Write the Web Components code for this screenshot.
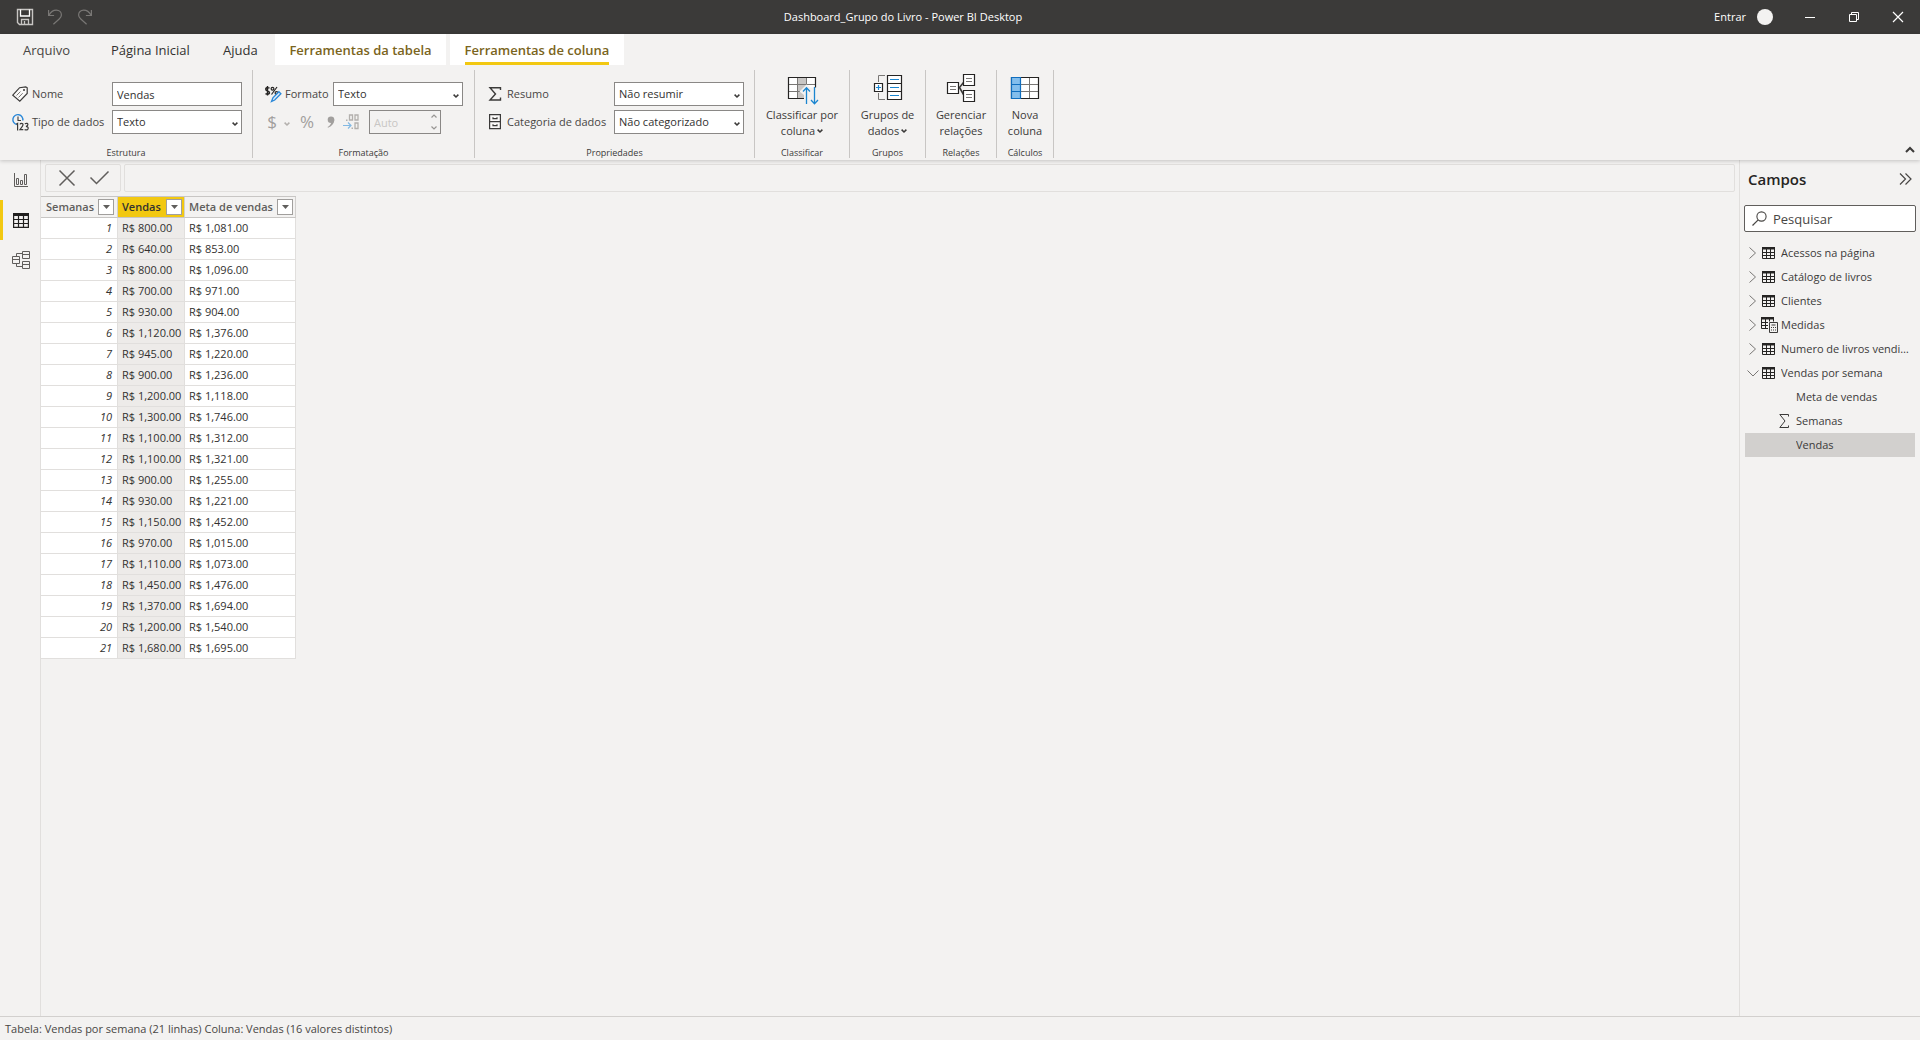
<!DOCTYPE html>
<html lang="pt-BR">
<head>
<meta charset="utf-8">
<title>Dashboard_Grupo do Livro - Power BI Desktop</title>
<style>
html, body { margin: 0; height: 100%; }
body { font: 11px/16px "Open Sans", "Noto Sans", sans-serif; color: #323130; background: #f3f2f1; overflow: hidden; }
</style>
</head>
<body>
<desktop-app></desktop-app>
<script>
const RESET = `
*, *::before, *::after { box-sizing: border-box; }
button, input, select { font: inherit; color: inherit; margin: 0; padding: 0; border: 0; background: none; border-radius: 0; outline: 0; }
button { display: inline-flex; align-items: center; justify-content: center; }
a { color: inherit; text-decoration: none; }
`;
function define(name, render, after) {
  customElements.define(name, class extends HTMLElement {
    constructor() { super(); this.attachShadow({ mode: 'open' }); }
    connectedCallback() {
      if (this.shadowRoot.childNodes.length) return;
      const t = document.createElement('template');
      t.innerHTML = render(this);
      this.shadowRoot.append(t.content.cloneNode(true));
      if (after) after(this);
    }
  });
}

/* Icons: [width, height, drawing] */
const TABLE = '<path d="M.5 1h12v10.500H.5zM.5 5.500h12M.5 8.500h12M4.500 1v10.500M8.500 1v10.500" fill="none" stroke="#252423"/><path d="M0 0h13v2.500H0z" fill="#252423"/>';
const ICONS = {
  save: [16, 16, '<path d="M.5.5h15v15h-13l-2-2z" fill="none" stroke="#c8c6c4" stroke-width="1.4"/><path d="M3.5.5v6.500h9V.5" fill="none" stroke="#fff" stroke-width="1.300"/><path d="M4.500 15.500v-5h7v5M7.500 12v3.500" fill="none" stroke="#c8c6c4" stroke-width="1.300"/>'],
  undo: [14, 16, '<path d="M.6 1v5.500h5.500M1 6.200C2.800 2.800 5.500 1.200 8.300 1.200c3 0 5.100 2 5.100 4.700 0 1.800-.9 2.900-2.200 4.100L5.400 15.200" fill="none" stroke="#797775" stroke-width="1.200"/>'],
  redo: [14, 16, '<path d="M13.400 1v5.500H7.900M13 6.200C11.200 2.800 8.500 1.200 5.700 1.200c-3 0-5.100 2-5.100 4.700 0 1.800.9 2.900 2.200 4.100l5.800 5.200" fill="none" stroke="#797775" stroke-width="1.200"/>'],
  min: [10, 10, '<path d="M0 5.500h10" stroke="#fff"/>'],
  restore: [10, 10, '<path d="M.5 2.500h7v7h-7zM2.500 2.500v-2h7v7h-2" fill="none" stroke="#fff"/>'],
  close: [10, 10, '<path d="M0 0l10 10M10 0L0 10" stroke="#fff" stroke-width="1.200"/>'],
  tag: [16, 16, '<path d="M.8 9.200L7.600 1.700 13.800.8l1.400 1v5.700l-7.400 7.600z" fill="#faf9f8" stroke="#3b3a39" stroke-width="1.200"/><circle cx="12" cy="4" r="1" fill="#3b3a39"/><path d="M4.500 9.500l4-4M6.500 11.500l4.200-4.300" stroke="#797775"/>'],
  type: [17, 17, '<path d="M4.800 10.500a5 5 0 1 1 6-4" fill="none" stroke="#2b88d8" stroke-width="1.400"/><path d="M6 2.500v4h3" fill="none" stroke="#3b3a39" stroke-width="1.100"/><path d="M4.300 10.200l1.300-.8v7M8 10.400q.3-1 1.500-1 1.600 0 1.500 1.400 0 1-3 4.800h3.300M12.800 9.800q3-1.200 3.100.8 0 1.700-2 1.800 2.400.1 2.300 1.900-.2 2.400-3.600 1.300" fill="none" stroke="#3b3a39" stroke-width="1.200"/>'],
  format: [17, 17, '<path d="M4.500 2Q.7 1 .7 3.100.7 4.600 2.500 5q2 .5 2 1.700 0 2-4 1M2.500 0v9.500" fill="none" stroke="#252423" stroke-width="1.400"/><circle cx="7.500" cy="2.800" r="1.400" fill="none" stroke="#252423" stroke-width="1.200"/><circle cx="11.500" cy="7" r="1.400" fill="none" stroke="#252423" stroke-width="1.200"/><path d="M12 1L6.500 8.500" stroke="#252423" stroke-width="1.200"/><path d="M6.500 15.500l1.400-3.600 6-6.200 2 2-6.200 6.300z" fill="#deecf9" stroke="#2b88d8" stroke-width="1.300"/>'],
  sigma: [13, 14, '<path d="M11.500 3V.8H1l5.500 6.200L1 13h10.500v-2.400" fill="none" stroke="#3b3a39" stroke-width="1.400"/>'],
  sigmaThin: [10, 14, '<path d="M9.500 2.500V.5H.8L6 7 .8 13.500h8.700v-2" fill="none" stroke="#3b3a39"/>'],
  drawer: [12, 16, '<path d="M.6.600h10.800v14H.6zM.6 7.600h10.800" fill="#faf9f8" stroke="#3b3a39" stroke-width="1.200"/><path d="M4 3.200v1.500h4V3.200M4 10.200v1.500h4v-1.500" fill="none" stroke="#3b3a39" stroke-width="1.200"/>'],
  chev: [6, 4, '<path d="M.6.600L3 3 5.400.6" fill="none" stroke="#3b3a39" stroke-width="1.500"/>'],
  chevGray: [6, 4, '<path d="M.6.600L3 3 5.400.6" fill="none" stroke="#b3b0ad" stroke-width="1.500"/>'],
  spin: [6, 16, '<path d="M.5 3.500L3 1l2.500 2.500M.5 12.500L3 15l2.500-2.500" fill="none" stroke="#979593" stroke-width="1.200"/>'],
  collapse: [10, 6, '<path d="M1 5l4-4 4 4" fill="none" stroke="#3b3a39" stroke-width="2"/>'],
  comma: [8, 12, '<circle cx="4" cy="3.700" r="3.300" fill="#a19f9d"/><path d="M7.300 3.500Q7.500 9 1 11.800L.6 11Q4.200 9 4.500 5z" fill="#a19f9d"/>'],
  decimals: [16, 16, '<path d="M6.500 1h3v5h-3zM12 1h3v5h-3zM12 9h3v5.500h-3z" fill="none" stroke="#b3b0ad" stroke-width="1.300"/><path d="M3 5.500h1.500v1.500H3zM8.500 13.500H10V15H8.500z" fill="#b3b0ad"/><path d="M0 11.500h8M5 8.500l3 3-3 3" fill="none" stroke="#83b9e3" stroke-width="1.200"/>'],
  sort: [32, 32, '<path d="M2.500 2.500h27v21h-27z" fill="#fff"/><path d="M11.500 3h9v20h-9z" fill="#c8c6c4"/><path d="M3 9.500h26M3 16.500h26M11.500 3v20M20.500 3v20" stroke="#797775"/><path d="M2.500 2.500h27v21h-27z" fill="none" stroke="#252423" stroke-width="1.200"/><path d="M13.500 16.500l7-7 4 3h7V25H18v-5z" fill="#f3f2f1"/><path d="M20.500 29V13M17 16.500l3.500-3.700 3.500 3.700M28.500 12v16M25 25l3.500 3.700L32 25" fill="none" stroke="#1b86d0" stroke-width="1.300"/>'],
  group: [32, 32, '<path d="M13 .5H6.500V7M6.500 18v6.500H13" fill="none" stroke="#797775"/><path d="M15.500.5h14v24h-14zM15.500 8.500h14M15.500 16.500h14M2.500 8.500h8v8h-8z" fill="#fff" stroke="#252423" stroke-width="1.200"/><path d="M18 4.500h9M18 12.500h9M18 20.500h9M4 12.500h5M6.500 10v5" stroke="#1b86d0" stroke-width="1.200"/>'],
  relation: [32, 32, '<path d="M13.500 12.500h1l4-5M14.500 12.500l4 7" fill="none" stroke="#3b3a39" stroke-width="1.600"/><path d="M2.500 7.500h11v11h-11zM18.500-.5h11v11h-11zM18.500 15.500h11v11h-11z" fill="#fff" stroke="#252423" stroke-width="1.200"/><path d="M5 11.500h6M5 14.500h6M21 3.500h6M21 6.500h6M21 19.500h6M21 22.500h6" stroke="#797775"/>'],
  newcol: [32, 32, '<path d="M2.500 2.500h27v21h-27z" fill="#fff"/><path d="M11.500 9.500h18M11.500 16.500h18M20.500 3v20" stroke="#797775"/><path d="M2.500 2.500h27v21h-27z" fill="none" stroke="#252423" stroke-width="1.200"/><path d="M2.500 2.500h9v21h-9zM2.500 9.500h9M2.500 16.500h9" fill="#83beec" stroke="#106ebe" stroke-width="1.200"/>'],
  report: [14, 15, '<path d="M.5 0v13.500H14" fill="none" stroke="#605e5c"/><path d="M2.500 5.500h2v6h-2zM6.500 7.500h2v4h-2zM10.500 1.500h2v10h-2z" fill="none" stroke="#605e5c"/>'],
  data: [16, 15, '<path d="M.6 1h14.800v13.400H.6zM1 6.500h14M1 10.500h14M5.500 3v11M10.500 3v11" fill="none" stroke="#201f1e" stroke-width="1.200"/><path d="M0 0h16v3H0z" fill="#201f1e"/>'],
  model: [18, 18, '<path d="M10.500.5h7v7h-7zM10.500 3.500h7M10.500 10.500h7v7h-7zM10.500 13.500h7M.5 5.500h7v7h-7zM.5 8.500h7M4.500 5.500v-3h6M4.500 12.500v3h6" fill="none" stroke="#605e5c"/>'],
  cancel: [16, 16, '<path d="M.5.500l15 15M15.500.5l-15 15" stroke="#605e5c" stroke-width="1.500"/>'],
  accept: [19, 14, '<path d="M.5 6.500l6 6L18.500.5" fill="none" stroke="#605e5c" stroke-width="1.500"/>'],
  filter: [7, 4, '<path d="M0 0h7L3.500 4z" fill="#605e5c"/>'],
  more: [13, 12, '<path d="M1 .5L6.500 6 1 11.500M6.500.5L12 6l-5.500 5.500" fill="none" stroke="#484644" stroke-width="1.200"/>'],
  search: [15, 15, '<circle cx="9.500" cy="5.500" r="4.600" fill="none" stroke="#484644" stroke-width="1.100"/><path d="M6.200 8.800L.5 14.500" stroke="#484644" stroke-width="1.200"/>'],
  right: [7, 12, '<path d="M.5.500L6.500 6l-6 5.500" fill="none" stroke="#797775"/>'],
  down: [12, 7, '<path d="M.5.500L6 6l5.500-5.500" fill="none" stroke="#797775"/>'],
  table: [13, 12, TABLE],
  measures: [16, 16, '<g transform="translate(-1)">' + TABLE + '</g><path d="M6 4.500h10V16H6z" fill="#f3f2f1"/><path d="M7.500 5.500h8v10h-8zM9.500 8h4" fill="none" stroke="#3b3a39"/><path d="M9 10h1v1H9zM11 10h1v1h-1zM13 10h1v1h-1zM9 12.500h1v1H9zM11 12.500h1v1h-1zM13 12.500h1v1h-1z" fill="#3b3a39"/>']
};
define('ui-icon', el => {
  const [w, h, d] = ICONS[el.getAttribute('name')];
  return `<style>:host{display:inline-flex;flex:none}svg{display:block;overflow:visible}</style>
  <svg width="${w}" height="${h}" viewBox="0 0 ${w} ${h}" aria-hidden="true">${d}</svg>`;
});

define('title-bar', () => `<style>${RESET}
:host { display: flex; height: 34px; background: #3b3a39; color: #fff; align-items: center; }
.quick { width: 112px; padding-left: 16px; display: flex; gap: 12px; }
.quick button { width: 18px; height: 20px; }
h1 { flex: 1; margin: 0; text-align: center; font-size: inherit; font-weight: 400; }
.right { width: 226px; display: flex; justify-content: flex-end; align-items: center; }
.avatar { width: 16px; height: 16px; border-radius: 50%; background: #f3f2f1; margin: 0 15px 0 11px; }
.win { width: 44px; height: 34px; }
</style>
<div class="quick"><button aria-label="Salvar"><ui-icon name="save"></ui-icon></button><button aria-label="Desfazer"><ui-icon name="undo"></ui-icon></button><button aria-label="Refazer"><ui-icon name="redo"></ui-icon></button></div>
<h1>Dashboard_Grupo do Livro - Power BI Desktop</h1>
<div class="right"><a href="#">Entrar</a><span class="avatar"></span>
<button class="win" aria-label="Minimizar"><ui-icon name="min"></ui-icon></button><button class="win" aria-label="Restaurar"><ui-icon name="restore"></ui-icon></button><button class="win" aria-label="Fechar"><ui-icon name="close"></ui-icon></button></div>`);

define('ribbon-tabs', () => `<style>${RESET}
:host { display: block; }
nav { display: flex; height: 31px; font-size: 13px; line-height: 33px; padding-left: 23px; }
a { display: block; height: 31px; }
.file { width: 88px; color: #484644; }
.home { width: 112px; }
.help { width: 52px; }
.ctx { background: #fff; color: #7a6420; font-weight: 600; width: 171px; text-align: center; }
.ctx.on { width: 174px; margin-left: 4px; }
.on span { display: inline-block; height: 31px; border-bottom: 3px solid #f2c811; }
</style>
<nav><a class="file" href="#">Arquivo</a><a class="home" href="#">Página Inicial</a><a class="help" href="#">Ajuda</a><a class="ctx" href="#">Ferramentas da tabela</a><a class="ctx on" href="#"><span>Ferramentas de coluna</span></a></nav>`);

define('ribbon-group', el => `<style>${RESET}
:host { display: flex; flex-direction: column; justify-content: space-between; height: 88px; border-right: 1px solid #c8c6c4; flex: none; }
.label { text-align: center; font-size: 9px; line-height: 10px; color: #3b3a39; }
</style>
<slot></slot><div class="label">${el.getAttribute('label')}</div>`);

define('ribbon-field', el => {
  const v = el.getAttribute('value');
  const c = el.hasAttribute('select')
    ? `<select id="c"><option>${v}</option></select><ui-icon name="chev"></ui-icon>`
    : `<input id="c" type="text" value="${v}">`;
  return `<style>${RESET}
:host { display: grid; grid-template-columns: 20px var(--label-w) 130px; align-items: center; height: 24px; }
:host > ui-icon, .lead { padding-left: var(--icon-pad, 0); }
label { color: #484644; white-space: nowrap; }
.box { display: grid; grid-template-columns: 1fr 10px; }
.box ui-icon { grid-area: 1 / 2; align-self: center; pointer-events: none; padding-top: 4px; }
input, select { grid-area: 1 / 1 / 2 / 3; width: 100%; height: 24px; border: 1px solid #8a8886; background: #fff; padding: 0 4px; appearance: none; }
</style>
<ui-icon class="lead" name="${el.getAttribute('icon')}"></ui-icon><label for="c">${el.getAttribute('label')}</label><div class="box">${c}</div>`;
});

define('ribbon-button', el => `<style>${RESET}
:host { display: block; width: var(--w); padding-top: 5px; }
button { display: flex; flex-direction: column; width: 100%; color: #3b3a39; line-height: 16px; }
.second { display: flex; align-items: center; gap: 2px; }
</style>
<button><ui-icon name="${el.getAttribute('icon')}"></ui-icon><span>${el.getAttribute('first')}</span><span class="second">${el.getAttribute('second')}${el.hasAttribute('menu') ? '<ui-icon name="chev"></ui-icon>' : ''}</span></button>`);

define('format-tools', () => `<style>${RESET}
:host { display: flex; align-items: center; height: 24px; color: #a19f9d; font-size: 17px; }
button { height: 24px; }
.cur { width: 14px; } .menu { width: 16px; padding-top: 4px; } .wide { width: 24px; } .dec { width: 16px; }
.spin { display: grid; grid-template-columns: 1fr 10px; width: 72px; margin-left: 10px; font-size: 11px; }
.spin input { grid-area: 1 / 1 / 2 / 3; height: 24px; width: 100%; border: 1px solid #8a8886; padding: 0 4px; color: #c8c6c4; }
.spin ui-icon { grid-area: 1 / 2; align-self: center; }
</style>
<button class="cur" disabled>$</button><button class="menu" disabled aria-label="Moedas"><ui-icon name="chevGray"></ui-icon></button><button class="wide" disabled>%</button><button class="wide" disabled aria-label="Milhares"><ui-icon name="comma"></ui-icon></button><button class="dec" disabled aria-label="Casas decimais"><ui-icon name="decimals"></ui-icon></button>
<div class="spin"><input type="text" value="Auto" disabled aria-label="Casas decimais"><ui-icon name="spin"></ui-icon></div>`);

define('app-ribbon', () => `<style>${RESET}
:host { display: block; position: relative; z-index: 1; background: #f3f2f1; box-shadow: 0 1px 4px rgba(0,0,0,.2); }
.groups { display: flex; padding: 5px 5px 2px 0; }
.fields { display: flex; flex-direction: column; gap: 4px; padding: 12px 10px 0 12px; }
.f1 { --label-w: 80px; } .f2 { --label-w: 48px; padding-right: 11px; } .f3 { --label-w: 107px; --icon-pad: 2px; }
.sort { --w: 94px; } .grp { --w: 75px; } .rel { --w: 70px; } .calc { --w: 56px; }
.collapse { margin: auto 0 5px auto; height: 6px; }
</style>
<ribbon-tabs></ribbon-tabs>
<div class="groups">
<ribbon-group label="Estrutura"><div class="fields f1"><ribbon-field icon="tag" label="Nome" value="Vendas"></ribbon-field><ribbon-field icon="type" label="Tipo de dados" value="Texto" select></ribbon-field></div></ribbon-group>
<ribbon-group label="Formatação"><div class="fields f2"><ribbon-field icon="format" label="Formato" value="Texto" select></ribbon-field><format-tools></format-tools></div></ribbon-group>
<ribbon-group label="Propriedades"><div class="fields f3"><ribbon-field icon="sigma" label="Resumo" value="Não resumir" select></ribbon-field><ribbon-field icon="drawer" label="Categoria de dados" value="Não categorizado" select></ribbon-field></div></ribbon-group>
<ribbon-group label="Classificar"><ribbon-button class="sort" icon="sort" first="Classificar por" second="coluna" menu></ribbon-button></ribbon-group>
<ribbon-group label="Grupos"><ribbon-button class="grp" icon="group" first="Grupos de" second="dados" menu></ribbon-button></ribbon-group>
<ribbon-group label="Relações"><ribbon-button class="rel" icon="relation" first="Gerenciar" second="relações"></ribbon-button></ribbon-group>
<ribbon-group label="Cálculos"><ribbon-button class="calc" icon="newcol" first="Nova" second="coluna"></ribbon-button></ribbon-group>
<button class="collapse" aria-label="Recolher faixa"><ui-icon name="collapse"></ui-icon></button>
</div>`);

define('view-rail', () => `<style>${RESET}
:host { display: flex; flex-direction: column; width: 41px; border-right: 1px solid #e1dfdd; flex: none; }
button { height: 40px; border-left: 3px solid transparent; padding-right: 2px; }
button.on { border-left-color: #f2c811; }
</style>
<button aria-label="Relatório"><ui-icon name="report"></ui-icon></button><button class="on" aria-label="Dados"><ui-icon name="data"></ui-icon></button><button aria-label="Modelo"><ui-icon name="model"></ui-icon></button>`);

define('formula-bar', () => `<style>${RESET}
:host { display: flex; gap: 3px; padding: 4px; }
.actions { width: 76px; height: 28px; border: 1px solid #e1dfdd; border-radius: 2px; display: flex; align-items: center; padding-left: 13px; gap: 15px; }
input { flex: 1; min-width: 0; height: 28px; border: 1px solid #e1dfdd; border-radius: 2px; padding: 0 6px; }
</style>
<div class="actions"><button aria-label="Cancelar"><ui-icon name="cancel"></ui-icon></button><button aria-label="Confirmar"><ui-icon name="accept"></ui-icon></button></div><input type="text" aria-label="Fórmula">`);

const ROWS = [['800.00','1,081.00'],['640.00','853.00'],['800.00','1,096.00'],['700.00','971.00'],['930.00','904.00'],['1,120.00','1,376.00'],['945.00','1,220.00'],['900.00','1,236.00'],['1,200.00','1,118.00'],['1,300.00','1,746.00'],['1,100.00','1,312.00'],['1,100.00','1,321.00'],['900.00','1,255.00'],['930.00','1,221.00'],['1,150.00','1,452.00'],['970.00','1,015.00'],['1,110.00','1,073.00'],['1,450.00','1,476.00'],['1,370.00','1,694.00'],['1,200.00','1,540.00'],['1,680.00','1,695.00']];
define('data-grid', () => {
  const th = (t, c) => `<th class="${c}" scope="col"><div><span>${t}</span><button aria-label="Filtrar ${t}"><ui-icon name="filter"></ui-icon></button></div></th>`;
  return `<style>${RESET}
:host { display: block; }
table { border-collapse: separate; border-spacing: 0; table-layout: fixed; width: 255px; border-top: 1px solid #c8c6c4; }
th, td { white-space: nowrap; }
th { height: 21px; padding: 0; border-bottom: 1px solid #c8c6c4; border-right: 1px solid #d2d0ce; color: #605e5c; font-weight: 600; text-align: left; }
th div { display: flex; align-items: center; justify-content: space-between; padding: 0 2px 0 4px; height: 20px; }
th button { width: 16px; height: 16px; background: #fff; border: 1px solid #a19f9d; }
th.a div { padding: 0 3px 0 5px; }
th.b div { background: #f2c811; color: #323130; }
th.a, td.a { width: 77px; } th.b, td.b { width: 67px; } th.c { width: 111px; }
td { height: 21px; padding: 0 4px; line-height: 20px; background: #fff; border-bottom: 1px solid #e1dfdd; border-right: 1px solid #e1dfdd; }
td.a { text-align: right; font-style: italic; padding-right: 5px; }
td.b { background: #edebe9; }
</style>
<table><thead><tr>${th('Semanas', 'a')}${th('Vendas', 'b')}${th('Meta de vendas', 'c')}</tr></thead>
<tbody>${ROWS.map((r, i) => `<tr><td class="a">${i + 1}</td><td class="b">R$ ${r[0]}</td><td class="c">R$ ${r[1]}</td></tr>`).join('')}</tbody></table>`;
});

define('tree-item', el => {
  const child = el.hasAttribute('child'), icon = el.getAttribute('icon');
  return `<style>${RESET}
:host { display: block; }
:host([selected]) { background: #d2d0ce; }
a { display: flex; align-items: center; height: 24px; color: #3b3a39; }
.arrow { width: 17px; display: flex; justify-content: center; padding-right: 2px; }
.icon { width: 19px; display: flex; }
.child .icon { margin-left: 34px; width: 17px; }
.text { flex: 1; min-width: 0; overflow: hidden; text-overflow: ellipsis; white-space: nowrap; }
</style>
<a href="#" class="${child ? 'child' : ''}">${child ? '' : `<span class="arrow"><ui-icon name="${el.hasAttribute('open') ? 'down' : 'right'}"></ui-icon></span>`}<span class="icon">${icon ? `<ui-icon name="${icon}"></ui-icon>` : ''}</span><span class="text"><slot></slot></span></a>`;
});

define('fields-pane', () => `<style>${RESET}
:host { display: flex; flex-direction: column; width: 181px; border-left: 1px solid #e1dfdd; flex: none; padding: 0 4px; }
header { display: flex; align-items: center; justify-content: space-between; height: 38px; padding: 0 4px; }
h2 { margin: 0; font-size: 15px; font-weight: 600; color: #252423; }
.search { display: flex; align-items: center; gap: 6px; height: 27px; margin: 7px 0 9px; padding: 0 7px; background: #fff; border: 1px solid #605e5c; border-radius: 2px; }
.search input { flex: 1; min-width: 0; font-size: 13px; }
.search input::placeholder { color: #484644; opacity: 1; }
.tree { padding: 0 1px; }
</style>
<header><h2>Campos</h2><button aria-label="Recolher painel"><ui-icon name="more"></ui-icon></button></header>
<div class="search"><ui-icon name="search"></ui-icon><input type="text" placeholder="Pesquisar" aria-label="Pesquisar"></div>
<div class="tree">
<tree-item icon="table">Acessos na página</tree-item><tree-item icon="table">Catálogo de livros</tree-item><tree-item icon="table">Clientes</tree-item><tree-item icon="measures">Medidas</tree-item><tree-item icon="table">Numero de livros vendidos</tree-item><tree-item icon="table" open>Vendas por semana</tree-item><tree-item child>Meta de vendas</tree-item><tree-item child icon="sigmaThin">Semanas</tree-item><tree-item child selected>Vendas</tree-item>
</div>`);

define('status-bar', () => `<style>:host { display: block; box-sizing: border-box; height: 24px; line-height: 23px; border-top: 1px solid #d2d0ce; padding-left: 5px; color: #484644; }</style><slot></slot>`);

define('desktop-app', () => `<style>${RESET}
:host { display: flex; flex-direction: column; height: 100vh; }
.work { flex: 1; display: flex; min-height: 0; }
main { flex: 1; min-width: 0; }
</style>
<title-bar></title-bar><app-ribbon></app-ribbon>
<div class="work"><view-rail></view-rail><main><formula-bar></formula-bar><data-grid></data-grid></main><fields-pane></fields-pane></div>
<status-bar>Tabela: Vendas por semana (21 linhas) Coluna: Vendas (16 valores distintos)</status-bar>`);
</script>
</body>
</html>
